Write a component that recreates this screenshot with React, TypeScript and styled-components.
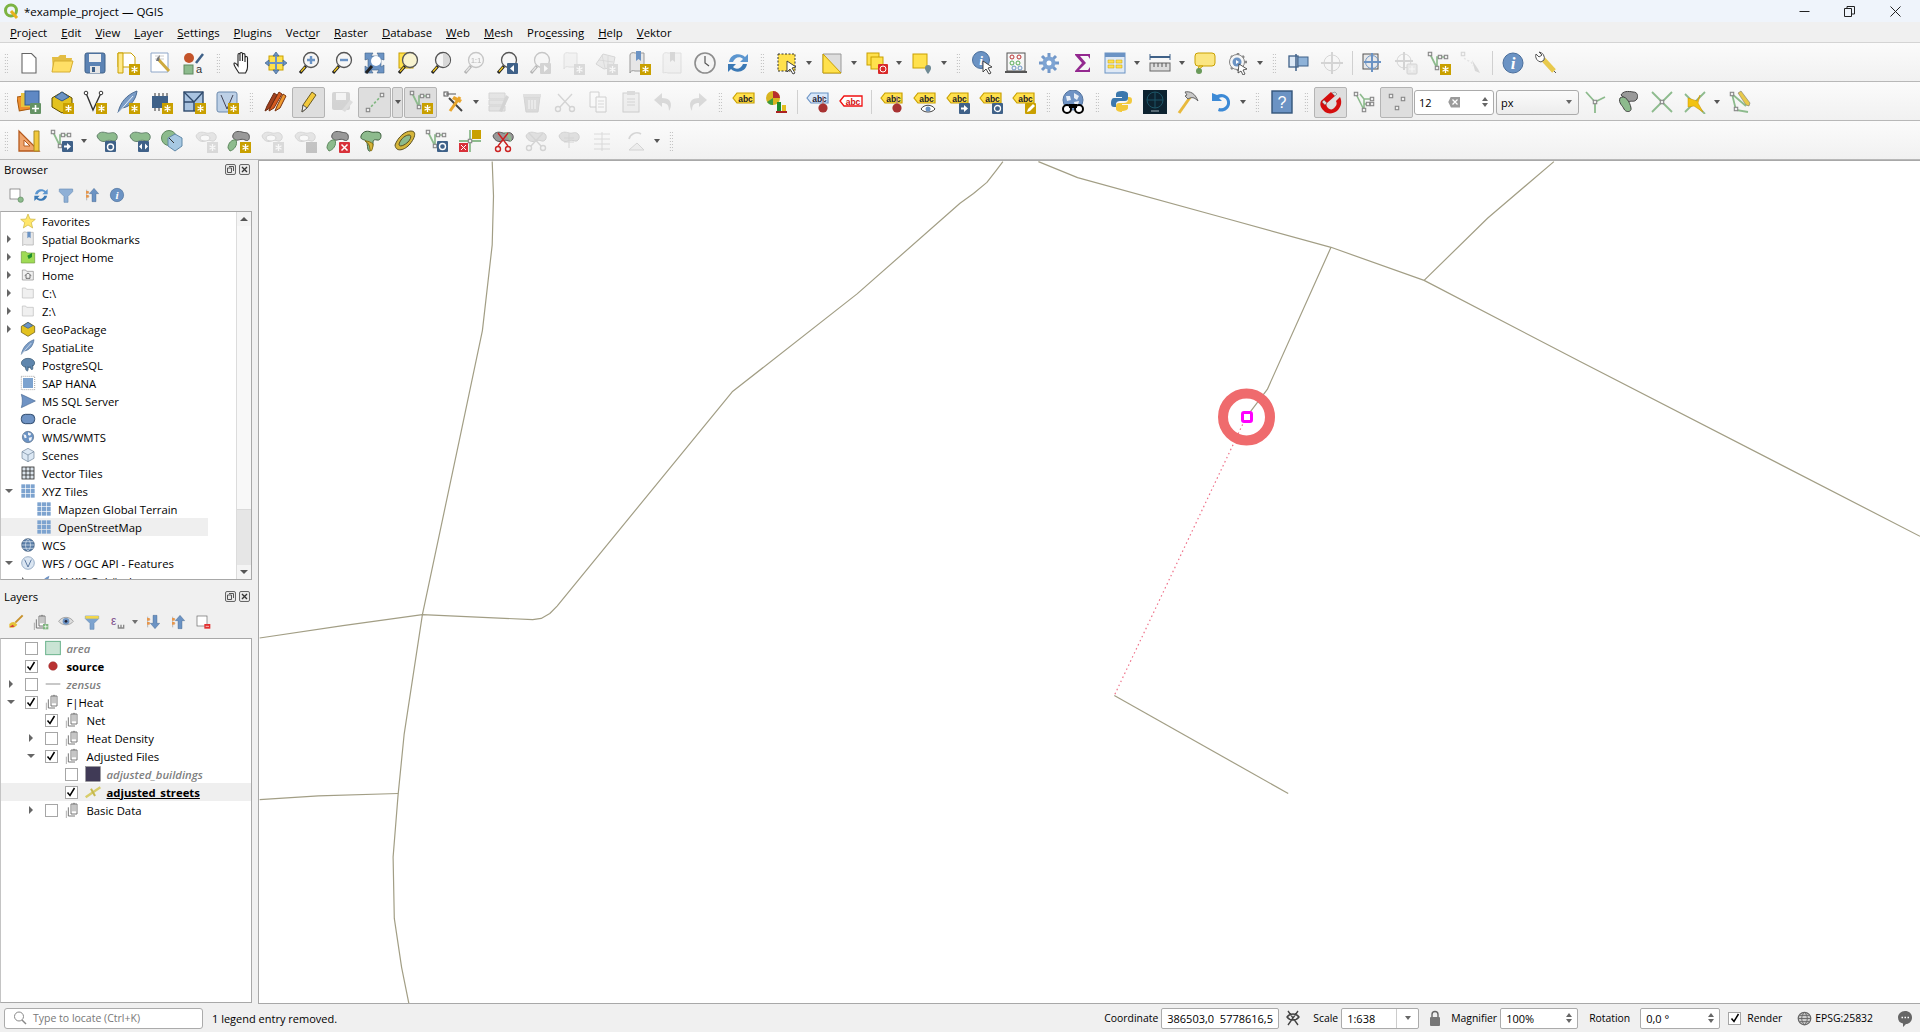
import React from "react";
import styled, { createGlobalStyle } from "styled-components";

const GlobalStyle = createGlobalStyle`
  html, body { margin: 0; padding: 0; height: 100%; overflow: hidden; }
  body { font-family: "Open Sans", "Liberation Sans", sans-serif; font-size: 11.3px; color: #000; background: #f0f0f0; }
`;

const Window = styled.div`
  width: 1920px;
  height: 1032px;
  display: flex;
  flex-direction: column;
  overflow: hidden;
`;

const TitleBar = styled.div`
  height: 22px;
  flex: none;
  background: #eff4fb;
  display: flex;
  align-items: center;
  padding-left: 3px;
  gap: 5px;
  font-size: 11.5px;
`;

const WinButtons = styled.div`
  margin-left: auto;
  display: flex;
  margin-right: 2px;
`;

const WinButton = styled.div`
  width: 45.5px;
  height: 22px;
  display: flex;
  align-items: center;
  justify-content: center;
`;

const MenuBar = styled.div`
  height: 20px;
  flex: none;
  background: #f0f0f0;
  border-bottom: 1px solid #d4d4d4;
  display: flex;
  align-items: center;
  gap: 14px;
  padding-left: 10px;
  font-size: 11.4px;
`;

const Toolbars = styled.div`
  display: flex;
  flex-direction: column;
  flex: none;
`;

const ToolRow = styled.div`
  height: 39px;
  box-sizing: border-box;
  padding-top: 2px;
  background: linear-gradient(#fbfbfb, #f1f1f1);
  border-bottom: 1px solid #b8b8b8;
  display: flex;
  align-items: center;
`;

const Grip = styled.div<{ $m?: number }>`
  width: 4px;
  height: 20px;
  margin: 0 ${({ $m }) => $m ?? 6}px;
  background-image: radial-gradient(#b0b0b0 0.7px, transparent 0.8px);
  background-size: 2.5px 3px;
  &:first-child {
    margin: 0 4px;
  }
`;

const Separator = styled.div`
  width: 1px;
  height: 24px;
  margin: 0 3.5px;
  background: #d0d0d0;
`;

const ToolButton = styled.div<{ $active?: boolean; $off?: boolean }>`
  width: 33px;
  height: 31px;
  flex: none;
  box-sizing: border-box;
  display: flex;
  align-items: center;
  justify-content: center;
  border-radius: 2px;
  border: 1px solid ${({ $active }) => ($active ? "#b4b4b4" : "transparent")};
  background: ${({ $active }) => ($active ? "#dedede" : "transparent")};
  svg {
    opacity: ${({ $off }) => ($off ? 0.3 : 1)};
    filter: ${({ $off }) => ($off ? "grayscale(1)" : "none")};
  }
`;

const Caret = styled.div`
  width: 12px;
  height: 31px;
  flex: none;
  display: flex;
  align-items: center;
  justify-content: center;
  &::after {
    content: "";
    border-left: 3.5px solid transparent;
    border-right: 3.5px solid transparent;
    border-top: 4px solid #555;
  }
`;

const CaretBox = styled(Caret)`
  box-sizing: border-box;
  border: 1px solid #b4b4b4;
  border-radius: 2px;
  background: #dedede;
  margin: 0 1px;
  width: 11px;
`;

const SpinField = styled.div<{ $w: number }>`
  width: ${({ $w }) => $w}px;
  height: 25px;
  flex: none;
  box-sizing: border-box;
  border: 1px solid #ababab;
  border-radius: 3px;
  background: #fff;
  display: flex;
  align-items: center;
  padding-left: 4px;
  font-size: 11px;
  margin-left: 1px;
`;

const ClearMark = styled.div`
  margin-left: auto;
  width: 12px;
  height: 11px;
  background: #9a9a9a;
  clip-path: polygon(22% 0, 100% 0, 100% 100%, 22% 100%, 0 50%);
  color: #fff;
  display: flex;
  align-items: center;
  justify-content: center;
  padding-left: 2px;
  box-sizing: border-box;
`;

const ComboField = styled(SpinField)`
  background: linear-gradient(#fbfbfb, #ececec);
  justify-content: space-between;
  padding-right: 6px;
  margin-left: 2px;
`;

const Main = styled.div`
  flex: 1;
  display: flex;
  min-height: 0;
`;

const Side = styled.div`
  width: 252px;
  flex: none;
  display: flex;
  flex-direction: column;
`;

const BrowserDock = styled.div`
  height: 420px;
  flex: none;
  display: flex;
  flex-direction: column;
`;

const LayersDock = styled.div`
  flex: 1;
  min-height: 0;
  display: flex;
  flex-direction: column;
  margin-top: 7px;
`;

const DockHead = styled.div`
  height: 19px;
  flex: none;
  display: flex;
  align-items: center;
  padding-left: 4px;
  font-size: 11.3px;
`;

const DockButtons = styled.div`
  margin-left: auto;
  display: flex;
  gap: 3px;
  margin-right: 2px;
`;

const DockButton = styled.div`
  width: 11px;
  height: 11px;
  box-sizing: border-box;
  border: 1px solid #666;
  border-radius: 2px;
  display: flex;
  align-items: center;
  justify-content: center;
  background: #e8e8e8;
`;

const DockTools = styled.div`
  height: 32px;
  flex: none;
  display: flex;
  align-items: center;
  padding-left: 3.5px;
`;

const SmallTool = styled.div`
  width: 25.2px;
  height: 24px;
  flex: none;
  display: flex;
  align-items: center;
  justify-content: center;
`;

const SmallCaret = styled(Caret)`
  width: 11px;
  height: 18px;
  &::after {
    border-top-color: #707070;
  }
`;

const TreeFrame = styled.div`
  flex: 1;
  min-height: 0;
  display: flex;
  background: #fff;
  border: 1px solid #a8a8a8;
  border-left-color: #c4c4c4;
  overflow: hidden;
`;

const LayerFrame = styled(TreeFrame)`
  margin-bottom: 1px;
`;

const TreeList = styled.div`
  flex: 1;
  overflow: hidden;
`;

const ScrollBar = styled.div`
  width: 14px;
  flex: none;
  display: flex;
  flex-direction: column;
  background: #e6e6e6;
  border-left: 1px solid #dcdcdc;
`;

const ScrollEnd = styled.div<{ $down?: boolean }>`
  height: 14px;
  background: #f4f4f4;
  display: flex;
  align-items: center;
  justify-content: center;
  &::after {
    content: "";
    border-left: 4px solid transparent;
    border-right: 4px solid transparent;
    ${({ $down }) => ($down ? "border-top: 4px solid #555;" : "border-bottom: 4px solid #555;")}
  }
`;

const ScrollThumb = styled.div`
  height: 283px;
  background: #f8f8f8;
  border-bottom: 1px solid #dadada;
`;

const ScrollRest = styled.div`
  flex: 1;
`;

const Row = styled.div<{ $selected?: number }>`
  height: 18px;
  display: flex;
  align-items: center;
  white-space: nowrap;
  background: ${({ $selected }) =>
    $selected ? `linear-gradient(90deg, #efefef ${$selected}px, transparent ${$selected}px)` : "transparent"};
`;

const RowIndent = styled.div<{ $w: number; $pad: number }>`
  width: ${({ $w }) => $w}px;
  padding-left: ${({ $pad }) => $pad}px;
  box-sizing: border-box;
  flex: none;
  display: flex;
  align-items: center;
`;

const RowIcon = styled.div`
  width: 18px;
  height: 18px;
  flex: none;
  display: flex;
  align-items: center;
  justify-content: center;
  margin-right: 5px;
`;

const ArrowBox = styled.div`
  width: 8px;
  display: flex;
  align-items: center;
  justify-content: center;
`;

const Arrow = styled.div<{ $open?: boolean }>`
  width: 0;
  height: 0;
  ${({ $open }) =>
    $open
      ? `border-left: 4px solid transparent; border-right: 4px solid transparent; border-top: 4px solid #666;`
      : `border-top: 4px solid transparent; border-bottom: 4px solid transparent; border-left: 4px solid #666;`}
`;

const Check = styled.div`
  width: 13px;
  height: 13px;
  flex: none;
  box-sizing: border-box;
  border: 1px solid #a6a6a6;
  background: #fff;
  margin-right: 6px;
  display: flex;
  align-items: center;
  justify-content: center;
`;

const RenderCheck = styled(Check)`
  margin-left: 8px;
`;

const LayerName = styled.span<{ $kind?: string }>`
  font-weight: ${({ $kind }) => ($kind === "bold" || $kind === "current" ? 700 : $kind === "off" ? 600 : 400)};
  font-style: ${({ $kind }) => ($kind === "off" ? "italic" : "normal")};
  color: ${({ $kind }) => ($kind === "off" ? "#808080" : "#000")};
  text-decoration: ${({ $kind }) => ($kind === "current" ? "underline" : "none")};
`;

const Splitter = styled.div`
  width: 6px;
  flex: none;
`;

const MapFrame = styled.div`
  flex: 1;
  background: #fff;
  border: 1px solid #a8a8a8;
  border-right: none;
  min-width: 0;
`;

const MapSvg = styled.svg`
  display: block;
  width: 100%;
  height: 100%;
`;

const StatusBar = styled.div`
  height: 28px;
  flex: none;
  display: flex;
  align-items: center;
  padding-left: 4px;
  font-size: 10.4px;
  background: #f0f0f0;
`;

const Locator = styled.div`
  width: 199px;
  height: 21px;
  box-sizing: border-box;
  border: 1px solid #ababab;
  border-radius: 3px;
  background: #fff;
  display: flex;
  align-items: center;
  padding-left: 8px;
  gap: 6px;
  color: #777;
  font-size: 10.5px;
`;

const Message = styled.div`
  margin-left: 9px;
  font-size: 11px;
`;

const StatusRight = styled.div`
  margin-left: auto;
  display: flex;
  align-items: center;
`;

const StatusLabel = styled.span<{ $l?: number }>`
  margin-left: ${({ $l }) => $l ?? 0}px;
  margin-right: 3px;
`;

const StatusField = styled.div<{ $w: number; $l?: number }>`
  width: ${({ $w }) => $w}px;
  margin-left: ${({ $l }) => $l ?? 0}px;
  height: 21px;
  box-sizing: border-box;
  border: 1px solid #ababab;
  border-radius: 2px;
  background: #fff;
  display: flex;
  align-items: center;
  padding-left: 5px;
  font-size: 11px;
  flex: none;
`;

const StatusIcon = styled.div<{ $w: number; $r?: number }>`
  width: ${({ $w }) => $w}px;
  height: 20px;
  flex: none;
  box-sizing: border-box;
  display: flex;
  align-items: center;
  justify-content: ${({ $r }) => ($r === undefined ? "center" : "flex-end")};
  padding-right: ${({ $r }) => $r ?? 0}px;
`;

const FieldEnd = styled.div`
  margin-left: auto;
  height: 100%;
  display: flex;
  flex-direction: column;
  align-items: center;
  justify-content: center;
  gap: 2px;
  width: 16px;
`;

const SpinUp = styled.i`
  border-left: 3.5px solid transparent;
  border-right: 3.5px solid transparent;
  border-bottom: 4px solid #666;
`;

const SpinDown = styled.i`
  border-left: 3.5px solid transparent;
  border-right: 3.5px solid transparent;
  border-top: 4px solid #666;
`;

const ComboEnd = styled.div`
  margin-left: auto;
  width: 21px;
  height: 100%;
  border-left: 1px solid #ccc;
  display: flex;
  align-items: center;
  justify-content: center;
`;

const Svg = ({ s = 24, children }: { s?: number; children: React.ReactNode }) => (
  <svg width={s} height={s} viewBox="0 0 24 24" fill="none">
    {children}
  </svg>
);

// shared bits of the QGIS icon theme
const GOLD = "#c9a000";
const YEL = "#ffe14d";
const GRN = "#8dbb8d";
const NAVY = "#3f6188";
const BLUE = "#6b93c4";

const Star = () => (
  <g>
    <rect x="13" y="13" width="11" height="11" fill={GOLD} />
    <path d="M18.5 15v7M15.5 16.7l6 3.6M21.5 16.7l-6 3.6" stroke="#fff" strokeWidth="1.3" />
  </g>
);
const Mag = ({ fill = "#f6f6f6" }: { fill?: string }) => (
  <g>
    <path d="M9 15l-6 7" stroke="#222" strokeWidth="3" />
    <path d="M8 16l-4 4.6" stroke="#f2c81e" strokeWidth="1.4" />
    <circle cx="14" cy="9" r="7.5" fill={fill} stroke="#555" strokeWidth="1.3" />
  </g>
);
const Node = ({ x, y, c = "#888" }: { x: number; y: number; c?: string }) => (
  <rect x={x - 1.7} y={y - 1.7} width="3.4" height="3.4" fill="#eee" stroke={c} strokeWidth="1.1" />
);
const VLine = () => (
  <g>
    <path d="M3 3l7 14V6h8" stroke={GRN} strokeWidth="1.7" />
    <Node x={3} y={3} />
    <Node x={10} y={17} />
    <Node x={13} y={6} />
    <Node x={19} y={6} />
  </g>
);
const Blob = ({ fill = GRN, stroke = "#62806a" }: { fill?: string; stroke?: string }) => (
  <path d="M2 7c2-5 7-4 10-3s6-2 9 1 0 8-3 7-5-1-7 0-7 1-9-5z" fill={fill} stroke={stroke} strokeWidth="1" />
);
const Sq = ({ x, y, c = NAVY, children }: { x: number; y: number; c?: string; children?: React.ReactNode }) => (
  <g transform={`translate(${x} ${y})`}>
    <rect width="11" height="11" rx="1" fill={c} />
    {children}
  </g>
);
const ArrowR = () => <path d="M2 4.5h3V2l4 3.5L5 9V6.5H2z" fill="#fff" />;
const LabelTag = ({ c = "#222", f = YEL, s = GOLD }: { c?: string; f?: string; s?: string }) => (
  <g>
    <path d="M1 8l4-5h17v10H5z" fill={f} stroke={s} strokeWidth="1.2" />
    <text x="13.5" y="11.5" fontSize="8.5" fontWeight="700" textAnchor="middle" fontFamily="Liberation Sans" fill={c}>
      abc
    </text>
  </g>
);
const Pin = () => (
  <g>
    <path d="M17 6v8" stroke="#b88" strokeWidth="1.3" />
    <circle cx="17" cy="18" r="4.6" fill="#a83232" />
  </g>
);
const Folder = ({ d = "#bbb" }: { d?: string }) => (
  <path d="M3.5 4.5h5l1.5 2h10v13h-16.500z" fill="#f0f0f0" stroke={d} strokeWidth="1" />
);
const Globe = ({ c = BLUE }: { c?: string }) => (
  <g>
    <circle cx="12" cy="12" r="8.500" fill={c} stroke="#5a6f88" />
    <path d="M5 8l4 1 1 4-3 1zM12 5l5 2-2 3-3-1zM13 13l5-1-1 5-3 1z" fill="#f0f3f8" />
  </g>
);
const Grid3 = ({ c = "#7da3cf" }: { c?: string }) => (
  <g fill={c}>
    {[2, 9, 16].map((y) =>
      [2, 9, 16].map((x) => <rect key={`${x}-${y}`} x={x} y={y} width="6" height="6" />)
    )}
  </g>
);
const Stack = () => (
  <g>
    <path d="M9 3h9v15H9z" fill="#fff" stroke="#6e6e6e" strokeWidth="1.400" />
    <path d="M5 8v13h10" stroke="#6e6e6e" strokeWidth="1.400" />
    <path d="M2 13v11" stroke="#9a9a9a" strokeWidth="1.200" />
    <path d="M12 14V4c0-3 3-3 3 0v10" stroke="#6e6e6e" strokeWidth="1.200" />
  </g>
);
const Scissors = () => (
  <g stroke="#888" strokeWidth="1.400">
    <path d="M5 4l12 13M19 4L7 17" />
    <circle cx="5" cy="19" r="2.500" />
    <circle cx="19" cy="19" r="2.500" />
  </g>
);

const icons: Record<string, React.ReactNode> = {
  newDoc: <path d="M5 2.500h9.500l4.500 4.500v15H5z" fill="#fff" stroke="#666" strokeWidth="1.100" />,
  folder: <g><path d="M2 6h6l2-2h6v3h6l-2 14H3z" fill="#e3bd43" /><path d="M4 10h19l-3 11H2z" fill="#ffdf66" stroke="#d6ae30" /></g>,
  save: <g><rect x="2" y="2" width="20" height="20" rx="2" fill="#5c83b4" stroke="#3f6188" /><rect x="6" y="3" width="12" height="8" fill="#f1f1f1" /><rect x="7" y="15" width="10" height="7" fill="#e6e6e6" /><rect x="9" y="16" width="3" height="5" fill="#3f6188" /></g>,
  layout: <g><path d="M2 2h13l4 4v10H2z" fill="#fff" stroke="#c9a000" /><path d="M2 2h5v20H2z" fill="#ffe98a" stroke={GOLD} /><Star /></g>,
  manager: <g><path d="M2 2h17v19H2z" fill="#fff" stroke="#8ea6c8" /><path d="M6 5h9M6 8h9" stroke="#ccc" /><path d="M9 8l11 12" stroke="#ceaa3e" strokeWidth="3" /><path d="M8 7l3-3-1 6-3 0z" fill="#777" /></g>,
  style: <g><circle cx="7" cy="7" r="5" fill="#c4542a" /><path d="M14 12L21 3" stroke={NAVY} strokeWidth="2.500" /><rect x="2" y="14" width="9" height="9" fill="#8dbb8d" stroke="#5f8a5f" /><text x="17" y="22" fontSize="11" fontFamily="Liberation Sans" fill="#333" textAnchor="middle">a</text></g>,
  hand: <path d="M8 22c-2-3-5-7-5-9s2-1 4 2V4c0-2 2-2 2 0v6V3c0-2 2.500-2 2.500 0v7-6c0-2 2.500-2 2.500 0v7-4c0-2 2.500-2 2.500 0v9c0 3-1 4-2 6z" fill="#fff" stroke="#222" strokeWidth="1.100" />,
  panSel: <g><rect x="5" y="5" width="14" height="14" fill={YEL} stroke={GOLD} /><path d="M12 1l3 4H9zM12 23l3-4H9zM1 12l4-3v6zM23 12l-4-3v6z" fill={BLUE} stroke={NAVY} strokeWidth=".7" /><path d="M12 5v14M5 12h14" stroke={BLUE} strokeWidth="2" /></g>,
  zoomIn: <g><Mag /><path d="M14 5v8M10 9h8" stroke={BLUE} strokeWidth="2.400" /></g>,
  zoomOut: <g><Mag /><path d="M10 9h8" stroke={BLUE} strokeWidth="2.400" /></g>,
  zoomFull: <g><path d="M2 2h8l-2 3 8 0-2-3h7v7l-3-1v8l3-2v8h-7l2-3H8l2 3H2v-7l3 2V8L2 9z" fill={BLUE} stroke={NAVY} strokeWidth=".6" /><path d="M9 15l-6 7" stroke="#222" strokeWidth="3" /><circle cx="13" cy="10" r="5" fill="#fff" /></g>,
  zoomLayer: <g><rect x="3" y="2" width="14" height="15" fill={YEL} stroke={GOLD} /><Mag fill="#f8f3d0" /></g>,
  zoomSel: <g><Mag /><path d="M14 2a7 7 0 010 14z" fill="#d8d8d8" /></g>,
  zoomOne: <g><Mag /><text x="14" y="12" fontSize="7" fontWeight="700" textAnchor="middle" fontFamily="Liberation Sans" fill="#555">1:1</text></g>,
  zoomLast: <g><Mag /><Sq x={12} y={12} c={NAVY}><path d="M7 2L3 5.500 7 9z" fill="#fff" /></Sq></g>,
  zoomNext: <g><Mag /><Sq x={12} y={12} c="#888"><path d="M4 2l4 3.500L4 9z" fill="#fff" /></Sq></g>,
  mapView: <g><path d="M3 4c0-2 3-3 5-2h8v14H8c-2-1-5 0-5 2z" fill="#e6e6e6" stroke="#aaa" /><Star /></g>,
  map3d: <g><path d="M2 13L9 3l12 3-2 10-9 2z" fill="#ccc" stroke="#888" /><path d="M5 9l14 2M8 4l3 13M14 5l0 12" stroke="#888" strokeWidth=".7" /><Star /></g>,
  bookNew: <g><path d="M3 4c0-2 3-3 5-2h9v18H8c-2-1-5 0-5 2z" fill="#e6e6e6" stroke="#999" /><path d="M9 0h5v10l-2.500-2L9 10z" fill={BLUE} /><Star /></g>,
  book: <g><path d="M3 4c0-2 3-3 5-2h13v20H8c-2-1-5 0-5 0z" fill="#e6e6e6" stroke="#aaa" /><path d="M10 1h5v10l-2.500-2-2.500 2z" fill={BLUE} /></g>,
  clock: <g><circle cx="12" cy="12" r="10" fill="#f4f4f4" stroke="#8d8d8d" strokeWidth="1.600" /><path d="M12 5v7l4 3" stroke="#555" strokeWidth="1.200" /></g>,
  refresh: <g><path d="M3 11C4 3 14 1 19 6l3-3v8h-8l3-3c-3-3-8-2-10 3z" fill="#5c96cf" /><path d="M21 13c-1 8-11 10-16 5l-3 3v-8h8l-3 3c3 3 8 2 10-3z" fill="#3b79b5" /></g>,
  select: <g><rect x="3" y="3" width="17" height="17" fill={YEL} stroke="#333" strokeDasharray="2 1.500" /><path d="M12 10l9 6-4 1 3 5-2 1-3-5-3 3z" fill="#fff" stroke="#333" strokeWidth=".9" /></g>,
  selectPoly: <g><path d="M3 3h18v19H3z" fill="#ddd" stroke="#999" /><path d="M3 3l18 19H3z" fill={YEL} stroke={GOLD} /></g>,
  deselect: <g><rect x="2" y="2" width="12" height="12" fill={YEL} stroke={GOLD} /><rect x="6" y="6" width="12" height="12" fill={YEL} stroke={GOLD} /><rect x="13" y="13" width="10" height="10" rx="1" fill="#d92a2a" /><circle cx="18" cy="18" r="3" stroke="#fff" /></g>,
  selectLoc: <g><rect x="3" y="3" width="14" height="14" fill={YEL} stroke={GOLD} /><path d="M18 23c-3-4-3-5-3-6a3 3 0 016 0c0 1 0 2-3 6z" fill="#6f8a94" /></g>,
  identify: <g><circle cx="10" cy="9" r="8.500" fill={BLUE} stroke="#4b6f9c" /><text x="10" y="14" fontSize="13" fontStyle="italic" fontWeight="700" textAnchor="middle" fontFamily="Liberation Serif" fill="#fff">i</text><path d="M12 10l9 6-4 1 3 5-2 1-3-5-3 3z" fill="#fff" stroke="#333" strokeWidth=".9" /></g>,
  abacus: <g stroke="#555" fill="none"><rect x="3" y="2" width="18" height="18" /><path d="M1 21h22" strokeWidth="2" /><circle cx="8" cy="6" r="2" stroke="#b33" /><circle cx="15" cy="6" r="2" stroke="#b33" /><circle cx="8" cy="12" r="2" stroke="#5a5" /><circle cx="14" cy="12" r="2" stroke="#5a5" /><circle cx="10" cy="17" r="2" stroke={BLUE} /><circle cx="16" cy="17" r="2" stroke={BLUE} /></g>,
  gear: <g><path d="M12 2v20M2 12h20M5 5l14 14M19 5L5 19" stroke="#7298c9" strokeWidth="3" /><circle cx="12" cy="12" r="6.500" fill="#7ea4d3" /><circle cx="12" cy="12" r="2.500" fill="#fff" /></g>,
  sigma: <path d="M5 3h15v5l-2-3H10l6 7-7 7h9l2-3v5H5v-1l7-8-7-8z" fill="#93288f" />,
  table: <g><rect x="2" y="2" width="20" height="20" fill="#dfe9f5" stroke={BLUE} /><rect x="2" y="2" width="20" height="4" fill={BLUE} /><path d="M5 9h6v3H5zM13 9h6v3h-6zM5 14h6v3H5zM13 14h6v3h-6z" fill={YEL} stroke={GOLD} strokeWidth=".5" /></g>,
  ruler: <g><path d="M2 6h20" stroke={NAVY} strokeWidth="2" /><path d="M2 3v6M22 3v6" stroke={NAVY} /><rect x="2" y="12" width="20" height="8" fill="#ddd" stroke="#666" /><path d="M6 12v4M10 12v4M14 12v4M18 12v4" stroke="#555" /></g>,
  tip: <g><rect x="2" y="2" width="20" height="13" rx="3" fill="#fbe682" stroke={GOLD} /><path d="M6 15l-1 4 5-4z" fill="#fbe682" stroke={GOLD} /><circle cx="6" cy="20" r="3" fill="#6a9a5a" /></g>,
  mapTips: <g><path d="M12 2v18M3 11h18M5 5l13 13M18 5L5 18" stroke="#888" strokeWidth="2.500" /><circle cx="11" cy="11" r="7.500" fill="#f6f6f6" stroke="#888" /><circle cx="11" cy="11" r="4.500" fill={BLUE} /><path d="M10 9l3 2-3 2z" fill="#fff" /><path d="M13 13l8 5-4 1 2 4-2 1-2-4-3 2z" fill="#fff" stroke="#333" strokeWidth=".8" /></g>,
  pinBox: <g><rect x="2" y="5" width="9" height="11" fill="#dce8f5" stroke={NAVY} strokeWidth="1.300" /><rect x="11" y="6" width="10" height="9" fill="#8eb2d8" stroke={NAVY} /><path d="M9 3v17" stroke={NAVY} strokeWidth="1.500" /></g>,
  cross: <g stroke="#888"><circle cx="12" cy="12" r="8" /><path d="M12 1v22M1 12h22" strokeWidth="2" /></g>,
  crossSel: <g><rect x="2" y="3" width="15" height="15" fill="#e8e8e8" stroke="#555" /><circle cx="11" cy="11" r="6.500" stroke={BLUE} /><path d="M11 2v19M3 11h17" stroke={BLUE} strokeWidth="2" /></g>,
  crossAdd: <g stroke="#888"><circle cx="10" cy="10" r="7" /><path d="M10 1v18M1 10h18" strokeWidth="2" /><rect x="13" y="13" width="10" height="10" rx="1" fill="#ccc" /><path d="M18 15v6M15 18h6" stroke="#fff" /></g>,
  vstar: <g><VLine /><Star /></g>,
  trace: <g><path d="M3 3c1 5 3 6 6 7s3 3 4 5" stroke="#bbb" strokeDasharray="2 2" strokeWidth="1.500" /><Node x={3} y={3} /><path d="M12 9l6 9 2 4-5-2z" fill="#999" /></g>,
  info: <g><circle cx="12" cy="12" r="10" fill={BLUE} stroke="#4b6f9c" /><text x="12" y="18" fontSize="17" fontStyle="italic" fontWeight="700" textAnchor="middle" fontFamily="Liberation Serif" fill="#fff">i</text></g>,
  wrench: <g><path d="M3 5a5 5 0 007 5l12 12" stroke="#555" strokeWidth="1" /><path d="M9 8l11 12" stroke="#e8c94c" strokeWidth="5" /><path d="M2 3l3 3 3-2-3-3a6 6 0 015 8l-3 2a6 6 0 01-5-8z" fill="#fff" stroke="#555" /></g>,

  addLayers: <g><rect x="1" y="6" width="13" height="14" transform="rotate(-10 7 13)" fill="#ef8f2f" stroke="#a85a10" /><rect x="4" y="3" width="13" height="14" fill="#e8c33e" /><rect x="8" y="1" width="14" height="14" fill="#5f88c4" stroke="#345a8c" /><rect x="13" y="13" width="11" height="11" rx="1" fill="#649264" /><path d="M18.500 15v7M15 18.500h7" stroke="#fff" strokeWidth="1.600" /></g>,
  gpkg: <g><path d="M2 8l10-6 10 6v9l-10 6-10-6z" fill="#e3c21f" stroke="#5b4a00" /><path d="M5 7l7-5 7 5-7 4z" fill={BLUE} stroke="#345a8c" /><Star /></g>,
  vnew: <g><path d="M3 3l7 17L18 3" stroke="#333" strokeWidth="1.400" /><circle cx="3" cy="3" r="1.800" stroke="#333" fill="#fff" /><circle cx="18" cy="3" r="1.800" stroke="#333" fill="#fff" /><Star /></g>,
  feather: <g><path d="M2 23c2-10 8-18 19-22-1 8-6 16-15 17z" fill="#7a9cc6" stroke="#4c6c94" /><path d="M2 23L17 6" stroke="#e6eef8" /></g>,
  featherStar: <g><path d="M2 23c2-10 8-18 19-22-1 8-6 16-15 17z" fill="#7a9cc6" stroke="#4c6c94" /><path d="M2 23L17 6" stroke="#e6eef8" /><Star /></g>,
  chip: <g><rect x="3" y="6" width="16" height="12" fill={NAVY} /><path d="M6 3v3M10 3v3M14 3v3M18 3v3M6 18v3M10 18v3" stroke="#333" /><Star /></g>,
  mesh: <g><rect x="2" y="2" width="19" height="19" fill="#a9c3e0" stroke="#2f4a6c" strokeWidth="1.400" /><path d="M2 2l10 10L21 2M12 12H2M12 12v9" stroke="#2f4a6c" strokeWidth="1.400" /><Star /></g>,
  virtual: <g><rect x="2" y="2" width="20" height="20" rx="2" fill="#bdd0e6" stroke="#6b89ad" /><path d="M6 5l6 14 6-14" stroke="#445" /><Star /></g>,
  pencils: <g><path d="M5 21l2-5L15 2l3 2-8 14z" fill="#d65a20" stroke="#7a3210" /><path d="M11 21l2-5 6-12 3 2-6 12z" fill="#ef9a30" stroke="#7a3210" /><path d="M1 21l2-5 7-13 3 2-7 13z" fill="#a0401f" stroke="#6a2a10" /></g>,
  pencil: <g><path d="M5 22l1-7L15 2l4 3-9 13z" fill="#f2c93c" stroke="#6b5a20" /><path d="M5 22l1-7 4 3z" fill="#eee" stroke="#555" /></g>,
  saveEdit: <g><rect x="2" y="2" width="18" height="18" rx="2" fill="#888" /><rect x="6" y="3" width="10" height="7" fill="#eee" /><path d="M12 20l8-10 3 2-8 10z" fill="#aaa" /></g>,
  addLine: <g><path d="M5 20L19 5" stroke="#80b780" strokeWidth="1.600" strokeDasharray="2.500 2" /><Node x={5} y={20} /><Node x={19} y={5} /></g>,
  digitize: <g><path d="M4 4h10" stroke="#555" /><rect x="2" y="2" width="4" height="4" stroke="#555" /><path d="M7 8l13 13" stroke="#444" strokeWidth="2" /><path d="M18 7L8 21" stroke="#e8a52c" strokeWidth="3" /><path d="M12 6l8 4-2 3-8-4z" fill="#e8a52c" /></g>,
  editAttr: <g><path d="M2 3h16v6H2zM2 10h16v5H2zM2 16h16v5H2z" fill="#bbb" stroke="#888" /><path d="M12 21l7-16 3 2-7 15z" fill="#888" /></g>,
  trash: <g><path d="M4 7h16l-2 15H6z" fill="#b89a9a" stroke="#887" /><path d="M3 4h18v3H3z" fill="#baa" /><path d="M9 10v9M12 10v9M15 10v9" stroke="#fff" /></g>,
  cut: <Scissors />,
  copy: <g><path d="M4 2h9v15H4z" fill="#fff" stroke="#777" /><path d="M10 7h10v15H10z" fill="#fff" stroke="#777" /><path d="M12 11h6M12 14h6M12 17h6" stroke="#999" /></g>,
  paste: <g><rect x="4" y="3" width="16" height="19" fill="#ddd" stroke="#777" /><rect x="8" y="1" width="8" height="4" fill="#999" /><path d="M8 9h8M8 12h8M8 15h8" stroke="#888" /></g>,
  undo: <path d="M10 3L2 10l8 7v-4c5 0 7 2 7 8 4-7 2-13-7-13z" fill="#999" />,
  redo: <path d="M14 3l8 7-8 7v-4c-5 0-7 2-7 8-4-7-2-13 7-13z" fill="#999" />,
  labelTool: <LabelTag />,
  diagram: <g><circle cx="8" cy="8" r="7" fill="#d9b520" /><path d="M8 8V1a7 7 0 017 7z" fill="#b72d2d" /><path d="M8 8l-6 4a7 7 0 006 3z" fill="#3d9b3d" /><rect x="12" y="12" width="4" height="10" fill="#1c8c2c" /><rect x="17" y="15" width="4" height="7" fill="#e3bd1e" /><path d="M11 22h11" stroke="#a22" strokeWidth="2" /></g>,
  labelPin: <g><LabelTag c="#223" f="#d8e8fb" s={BLUE} /><Pin /></g>,
  labelRed: <g><path d="M1 11l4-5h18v10H5z" fill="#fff" stroke="#f01010" strokeWidth="1.300" /><text x="14" y="14.500" fontSize="8.500" fontWeight="700" textAnchor="middle" fontFamily="Liberation Sans" fill="#d01010">abc</text></g>,
  labelYPin: <g><LabelTag /><Pin /></g>,
  labelEye: <g><LabelTag /><path d="M8 19c3-5 11-5 14 0-3 4-11 4-14 0z" fill="#fff" stroke="#444" /><circle cx="15" cy="19" r="2.500" fill={BLUE} /></g>,
  labelMove: <g><LabelTag /><Sq x={13} y={13}><ArrowR /></Sq></g>,
  labelRot: <g><LabelTag /><Sq x={13} y={13}><circle cx="5.500" cy="5.500" r="3" stroke="#fff" strokeWidth="1.300" /></Sq></g>,
  labelEdit: <g><LabelTag /><Sq x={13} y={13} c={GOLD}><path d="M2 9l1-3 5-5 2 2-5 5z" fill="#fff" /></Sq></g>,
  globeBino: <g><circle cx="12" cy="10" r="10" fill="#6f93c4" stroke="#54749e" /><path d="M5 6l4 0 1 4-4 1zM13 3l5 3-2 4-3-2zM13 12l5-1-1 4-3 1z" fill="#e8eef6" /><circle cx="6" cy="19" r="4" fill="#fff" stroke="#000" strokeWidth="2" /><circle cx="18" cy="19" r="4" fill="#fff" stroke="#000" strokeWidth="2" /><path d="M8 14h8v4H8z" fill="#000" /></g>,
  python: <g><path d="M12 1c-4 0-6 1-6 3v3h6v1H4c-2 0-3 2-3 5s1 4 3 4h2v-3c0-2 2-3 4-3h5c2 0 3-1 3-3V4c0-2-3-3-6-3z" fill="#3c78ad" /><path d="M12 21c3 0 6-1 6-3v-3h-6v-1h7c2 0 3-1 3-4 0-2-1-3-3-3h-1v3c0 2-2 3-4 3H9c-2 0-3 1-3 3v3c0 2 3 3 6 3z" fill="#f2c93c" /></g>,
  dark: <g><rect x="0" y="0" width="24" height="24" fill="#0d2330" /><circle cx="12" cy="10" r="8" stroke="#1d5566" /><path d="M12 2v16M4 10h16" stroke="#1d5566" /><path d="M8 21h8" stroke="#a0b0b8" /></g>,
  hammer: <g><path d="M3 23L15 6" stroke="#e8b93c" strokeWidth="3" /><path d="M9 2c5-1 10 1 13 9-3-3-5-4-8-3l-2 1-3-3 2-1z" fill="#c8c8c8" stroke="#666" /></g>,
  undoBlue: <g><path d="M8 5c7-3 14 2 13 9-1 6-7 9-12 7l1-3c4 1 7-1 8-4 1-5-4-8-8-6l3 3H3V3z" fill="#3d8ad6" /></g>,
  help: <g><rect x="2" y="1" width="20" height="22" fill={BLUE} stroke="#33547a" strokeWidth="1.400" /><text x="12" y="18" fontSize="16" fontWeight="400" textAnchor="middle" fontFamily="Liberation Sans" fill="#fff">?</text></g>,
  magnet: <g><path d="M12 2L2 11c-2 5 1 8 4 11 3 2 8 2 12-1 5-5 5-10 3-14l-4 4c1 2 1 4-1 6-2 3-5 3-7 1-2-2-2-4-1-5l8-7z" fill="#d40e0e" /><path d="M3 12l3 3 2-2-3-3zM13 3l3 3 2-2-2-2z" fill="#ddd" stroke="#666" strokeWidth=".5" /></g>,
  snapV: <g><path d="M4 4l8 16V9h8M12 9l-4-5" stroke={GRN} strokeWidth="1.600" /><path d="M12 14h8" stroke={GRN} strokeWidth="1.600" /><Node x={4} y={4} /><Node x={12} y={20} /><Node x={20} y={9} /><Node x={16} y={14} /><Node x={20} y={14} /></g>,
  snapDots: <g><Node x={6} y={6} /><Node x={18} y={9} /><Node x={12} y={18} /></g>,
  topoY: <g><path d="M11 12v11M11 12L2 2M11 12l10-5" stroke={GRN} strokeWidth="1.800" /><Node x={11} y={12} /></g>,
  topoPoly: <g><path d="M4 5c2-4 7-4 12-3 5 0 5 4 4 7-3 4-6 1-8 3z" fill="#999" stroke="#444" /><path d="M3 8c-2 5 3 8 4 11 2 4 8 3 7-1-1-6-6-14-11-10z" fill={GRN} stroke="#444" /></g>,
  topoX: <g><path d="M2 2l20 20M22 2L2 22" stroke={GRN} strokeWidth="1.800" /><Node x={12} y={12} /></g>,
  topoBolt: <g><path d="M2 22L22 2M2 4l20 20" stroke={GRN} strokeWidth="1.800" /><path d="M5 8l9 3 3-6-2 8 5 9-9-6-6 1z" fill="#f2c311" stroke="#c88c00" strokeWidth=".5" /></g>,
  topoPen: <g><path d="M4 4l4 16 12 2M4 4l14 12" stroke={GRN} strokeWidth="1.800" /><Node x={4} y={4} /><Node x={8} y={19} /><path d="M10 3l3-2 9 12-1 3-3-1z" fill="#e8c94c" stroke="#666" strokeWidth=".5" /></g>,

  triangle: <g><path d="M2 22V2l20 20z" fill="#f0a66e" stroke="#b55a1e" strokeWidth="1.300" /><path d="M7 17v-6l6 6z" fill="#fff" stroke="#b55a1e" /><path d="M17 2h5v20h-5z" fill="#f2c93c" stroke="#a88a20" /></g>,
  vMove: <g><VLine /><Sq x={12} y={12}><ArrowR /></Sq></g>,
  blobRot: <g><Blob /><Sq x={10} y={12}><circle cx="5.500" cy="6" r="3" stroke="#fff" strokeWidth="1.400" /></Sq></g>,
  blobMove: <g><Blob /><Sq x={10} y={12}><path d="M1 5.500l3-3v6zM10 5.500l-3-3v6z" fill="#fff" /></Sq></g>,
  hex: <g><circle cx="8" cy="9" r="7.500" fill={GRN} stroke="#5f8a5f" /><path d="M14 5l7 4v8l-7 5-7-5V9z" fill="#a6c8e2" stroke="#6189a8" /><path d="M8 9l5 5" stroke="#333" /></g>,
  ringAdd: <g><Blob fill="#bbb" stroke="#888" /><ellipse cx="11" cy="9" rx="5" ry="3" fill="#fff" stroke="#888" /><Star /></g>,
  partAdd: <g><path d="M6 6c1-4 6-4 9-3s6 0 7 3 0 7-4 5-7 1-9 0-4-2-3-5z" fill="#999" stroke="#555" /><path d="M1 19c0-5 4-9 8-8 2 5-2 10-6 11z" fill={GRN} stroke="#5f8a5f" /><Star /></g>,
  ringAddOff: <g><Blob fill="#bbb" stroke="#888" /><ellipse cx="11" cy="9" rx="5" ry="3" fill="#fff" stroke="#888" /><Star /></g>,
  ringDel: <g><Blob fill="#bbb" stroke="#888" /><ellipse cx="11" cy="9" rx="5" ry="3" fill="#fff" stroke="#888" /><rect x="13" y="13" width="11" height="11" fill="#e28" /></g>,
  partDel: <g><path d="M6 6c1-4 6-4 9-3s6 0 7 3 0 7-4 5-7 1-9 0-4-2-3-5z" fill="#999" stroke="#555" /><path d="M1 19c0-5 4-9 8-8 2 5-2 10-6 11z" fill={GRN} stroke="#5f8a5f" /><rect x="13" y="13" width="11" height="11" rx="1" fill="#d8313a" /><path d="M15.500 15.500l6 6M21.500 15.500l-6 6" stroke="#fff" strokeWidth="1.500" /></g>,
  reshape: <g><path d="M2 7c2-6 8-5 10-4s7-1 9 1 1 8-3 7-4 1-4 4-2 8-4 7-1-8-3-10-6-1-5-5z" fill={GRN} stroke="#3e5f3e" /><path d="M6 12c2 1 3 2 4 4 1 3 1 6 2 6s2-4 2-7c-2-2-5-3-8-3z" fill="#d5b53a" stroke="#8a6f10" /></g>,
  offset: <g><path d="M3 16C6 8 13 2 19 2s4 7-1 13-14 9-15 1z" fill="#d5b53a" stroke="#5a5020" /><path d="M7 15C9 9 14 6 17 6s2 4-1 7-9 6-9 2z" fill={GRN} stroke="#5a5020" /></g>,
  vRot: <g><VLine /><Sq x={12} y={12}><circle cx="5.500" cy="5.500" r="3" stroke="#fff" strokeWidth="1.400" /></Sq></g>,
  split: <g><path d="M12 1v22M1 12h22" stroke={GRN} strokeWidth="1.800" /><Node x={12} y={12} /><rect x="14" y="1" width="9" height="9" fill={GOLD} /><rect x="1" y="14" width="9" height="9" fill="#d8313a" /><path d="M3 16l5 5M8 16l-5 5" stroke="#fff" /></g>,
  splitCut: <g><Blob fill="#999" stroke="#555" /><path d="M13 3c5 0 8 4 7 10z" fill={GRN} /><path d="M7 4l10 13M17 4L7 17" stroke="#c22" strokeWidth="1.400" /><circle cx="7" cy="20" r="2.500" stroke="#c22" strokeWidth="1.400" /><circle cx="17" cy="20" r="2.500" stroke="#c22" strokeWidth="1.400" /></g>,
  splitOff: <g><Blob fill="#aaa" stroke="#777" /><Scissors /></g>,
  merge: <g><Blob fill="#aaa" stroke="#777" /><path d="M12 5v14M7 9h10M7 13h10" stroke="#888" /></g>,
  align: <g stroke="#999"><path d="M4 5h16M4 10h16M4 15h16M4 20h16M12 3v19" /></g>,
  rotateOff: <g><path d="M6 10a8 8 0 0112-5" stroke="#888" strokeWidth="1.600" /><path d="M14 14l7 7H6z" fill="#ddd" stroke="#888" /></g>,

  starTree: <path d="M12 1.500l3 7.500 8 .5-6 5 2 8-7-4.500-7 4.500 2-8-6-5 8-.5z" fill="#ffe66b" stroke="#c8b23c" />,
  bookTree: <g><path d="M4 3c1-2 4-2 5-1h11v19H9c-1-1-4-1-5 1z" fill="#e8e8e8" stroke="#aaa" /><path d="M11 1h5v10l-2.500-2-2.500 2z" fill={BLUE} /></g>,
  homeProject: <g><path d="M2 4h7l2 2h11v15H2z" fill="#9fdb55" stroke="#6f9a3c" /><path d="M11 10l7-4v6l-5 3z" fill="#1f8e2e" /></g>,
  homeTree: <g><Folder d="#888" /><path d="M7 13l5-4 5 4M9 12v5h6v-5" stroke="#333" /></g>,
  folderTree: <Folder />,
  gpkgTree: <g><path d="M2 8l10-6 10 6v9l-10 6-10-6z" fill="#e3c21f" stroke="#5b4a00" /><path d="M5 7l7-5 7 5-7 4z" fill={BLUE} stroke="#345a8c" /></g>,
  pg: <g><ellipse cx="12" cy="9" rx="10" ry="7" fill="#5f86ad" stroke="#36566f" /><path d="M8 14c0 4 1 7 3 7s1-5 1-7M15 14c1 3 1 5 3 5s1-4 1-7" fill="#5f86ad" stroke="#36566f" /></g>,
  hana: <g><rect x="2" y="2" width="20" height="20" stroke="#777" strokeDasharray="1.500 1.500" /><rect x="4.500" y="4.500" width="15" height="15" fill="#7da3cf" /></g>,
  mssql: <path d="M2 2c7 3 14 7 21 10-7 3-14 7-21 10 2-7 2-13 0-20z" fill="#6f93c4" stroke="#4a6a94" />,
  oracle: <rect x="2" y="5" width="20" height="14" rx="6" fill="#6f93c4" stroke="#2f4a6c" strokeWidth="1.500" />,
  globe: <Globe />,
  scenes: <g><path d="M12 2l9 5v10l-9 5-9-5V7z" fill="#dce8f4" stroke="#6a7f96" /><path d="M3 7l9 5 9-5M12 12v10" stroke="#6a7f96" /></g>,
  vtiles: <g><rect x="3" y="3" width="18" height="18" fill="#dce4ec" stroke="#333" strokeWidth="1.300" /><path d="M9 3v18M15 3v18M3 9h18M3 15h18" stroke="#333" strokeWidth="1.300" /></g>,
  xyz: <Grid3 />,
  wcs: <g><circle cx="12" cy="12" r="9.500" fill="#5a7ea8" stroke="#35506f" /><path d="M2 12h20M12 3c-5 5-5 13 0 18M12 3c5 5 5 13 0 18M4 7h16M4 17h16" stroke="#e0e8f2" /></g>,
  wfs: <g><circle cx="12" cy="12" r="9.500" fill="#dbe6f2" stroke="#6f8dae" /><path d="M7 7l5 11 5-11" stroke="#4a6a94" strokeWidth="1.300" /></g>,
  alkis: <path d="M6 22c1-8 5-14 14-18-1 7-5 12-11 13z" fill="#6f93c4" />,
  stack: <Stack />,
  area: <rect x="1" y="2" width="22" height="20" fill="#c9e4d4" stroke="#62ae86" strokeWidth="1.400" />,
  dot: <circle cx="12" cy="12" r="6.500" fill="#b93232" stroke="#8f2525" strokeWidth=".6" />,
  dash: <rect x="1" y="10.500" width="22" height="3" fill="#c8c8c8" />,
  dark2: <rect x="1" y="1" width="22" height="22" fill="#403a56" stroke="#6a6a6a" strokeWidth=".6" />,
  lineStyle: <g><path d="M1 20L23 5" stroke="#d8cd6a" strokeWidth="3.500" /><path d="M9 7l6 11" stroke="#c5b84e" strokeWidth="3" /></g>,
};

// small panel toolbar icons
const miniIcons: Record<string, React.ReactNode> = {
  addGroup: <g><rect x="3" y="3" width="15" height="15" fill="#fff" stroke="#666" /><circle cx="19" cy="19" r="4" fill="#8dbb8d" stroke="#5f8a5f" /></g>,
  filter: <path d="M2 3h20v4l-7 7v9h-6v-9L2 7z" fill="#8fb0d6" stroke="#6b8fb8" />,
  expand: <g><path d="M4 4v16M4 8h4M4 14h4" stroke="#999" /><rect x="3" y="6" width="4" height="4" fill="#e8964a" /><rect x="3" y="12" width="4" height="4" fill="#e8964a" /><path d="M15 2l7 8h-4v12h-6V10H8z" fill={BLUE} stroke={NAVY} strokeWidth=".6" /></g>,
  collapse: <g><path d="M4 4v16M4 8h4M4 14h4" stroke="#999" /><rect x="3" y="6" width="4" height="4" fill="#e8964a" /><rect x="3" y="12" width="4" height="4" fill="#e8964a" /><path d="M15 22l7-8h-4V2h-6v12H8z" fill={BLUE} stroke={NAVY} strokeWidth=".6" /></g>,
  brush: <g><path d="M11 13l11-11" stroke="#c8922c" strokeWidth="3" /><path d="M2 15c3-3 6-4 9-2l3 3c-3 4-8 6-12 4z" fill="#e5c23a" /><path d="M2 20l5-4 3 3z" fill="#d63a3a" /></g>,
  addStack: <g><Stack /><rect x="15" y="15" width="8" height="8" fill="#7fb57f" /><path d="M19 16v6M16 19h6" stroke="#fff" /></g>,
  eye: <g><path d="M1 11c5-8 17-8 22 0-5 7-17 7-22 0z" fill="#ddd" stroke="#888" /><circle cx="12" cy="11" r="5" fill={BLUE} /><circle cx="12" cy="11" r="2" fill="#223" /></g>,
  filterY: <g><path d="M2 3h20v4l-7 7v9h-6v-9L2 7z" fill="#7da3cf" stroke="#6b8fb8" /><path d="M2 3h20v4H2z" fill="#f2d64c" /></g>,
  epsilon: <g><text x="7" y="16" fontSize="18" textAnchor="middle" fontFamily="Liberation Sans" fill="#7b4c8a">ε</text><path d="M13 22v-6h2v4h2v-4h2v4h2v-4h2v6z" fill="#888" /></g>,
  remove: <g><rect x="3" y="3" width="15" height="15" fill="#fff" stroke="#666" /><rect x="14" y="15" width="9" height="7" fill="#e23030" /><path d="M16 18.500h5" stroke="#fff" /></g>,
};

const rows: string[][] = [
  ["|", "newDoc", "folder", "save", "layout", "manager", "style", "|", "hand", "panSel", "zoomIn", "zoomOut", "zoomFull", "zoomLayer", "zoomSel", "!zoomOne", "zoomLast", "!zoomNext", "!mapView", "!map3d", "bookNew", "!book", "clock", "refresh", "|", "select", ">", "selectPoly", ">", "deselect", ">", "selectLoc", ">", "|", "identify", "abacus", "gear", "sigma", "table", ">", "ruler", ">", "tip", "mapTips", ">", "|", "pinBox", "!cross", "/", "crossSel", "!crossAdd", "vstar", "!trace", "/", "info", "wrench"],
  ["|", "addLayers", "gpkg", "vnew", "featherStar", "chip", "mesh", "virtual", "|", "pencils", "*pencil", "!saveEdit", "*addLine", "#", "*vstar", "digitize", ">", "!editAttr", "!trash", "!cut", "!copy", "!paste", "!undo", "!redo", "¦", "labelTool", "diagram", "/", "labelPin", "labelRed", "/", "labelYPin", "labelEye", "labelMove", "labelRot", "labelEdit", "|", "globeBino", "|", "python", "dark", "hammer", "undoBlue", ">", "|", "help", "|", "*magnet", "snapV", "*snapDots", "@spin", "@combo", "topoY", "topoPoly", "topoX", "topoBolt", ">", "topoPen"],
  ["|", "triangle", "vMove", ">", "blobRot", "blobMove", "hex", "!ringAdd", "partAdd", "!ringAddOff", "!ringDel", "partDel", "reshape", "offset", "vRot", "split", "splitCut", "!splitOff", "!merge", "!align", "!rotateOff", ">", "|"],
];

const Tool = ({ item }: { item: string }) => {
  if (item === "|") return <Grip />;
  if (item === "¦") return <Grip $m={5} />;
  if (item === "/") return <Separator />;
  if (item === ">") return <Caret />;
  if (item === "#") return <CaretBox />;
  if (item === "@spin")
    return (
      <SpinField $w={80}>
        12
        <ClearMark>
          <svg width="6" height="6" viewBox="0 0 6 6">
            <path d="M.5.500l5 5M5.500.500l-5 5" stroke="#fff" strokeWidth="1.300" />
          </svg>
        </ClearMark>
        <FieldEnd>
          <SpinUp />
          <SpinDown />
        </FieldEnd>
      </SpinField>
    );
  if (item === "@combo")
    return (
      <ComboField $w={83}>
        px
        <SpinDown />
      </ComboField>
    );
  const flag = item[0];
  const name = flag === "!" || flag === "*" ? item.slice(1) : item;
  return (
    <ToolButton $off={flag === "!"} $active={flag === "*"}>
      <Svg>{icons[name]}</Svg>
    </ToolButton>
  );
};

const menus: [string, string, string][] = [
  ["", "P", "roject"],
  ["", "E", "dit"],
  ["", "V", "iew"],
  ["", "L", "ayer"],
  ["", "S", "ettings"],
  ["", "P", "lugins"],
  ["Vect", "o", "r"],
  ["", "R", "aster"],
  ["", "D", "atabase"],
  ["", "W", "eb"],
  ["", "M", "esh"],
  ["Pro", "c", "essing"],
  ["", "H", "elp"],
  ["", "V", "ektor"],
];

type BrowserItem = { name: string; icon: string; arrow?: "open" | "closed"; depth?: number; selected?: boolean };

const browserItems: BrowserItem[] = [
  { name: "Favorites", icon: "starTree" },
  { name: "Spatial Bookmarks", icon: "bookTree", arrow: "closed" },
  { name: "Project Home", icon: "homeProject", arrow: "closed" },
  { name: "Home", icon: "homeTree", arrow: "closed" },
  { name: "C:\\", icon: "folderTree", arrow: "closed" },
  { name: "Z:\\", icon: "folderTree", arrow: "closed" },
  { name: "GeoPackage", icon: "gpkgTree", arrow: "closed" },
  { name: "SpatiaLite", icon: "feather" },
  { name: "PostgreSQL", icon: "pg" },
  { name: "SAP HANA", icon: "hana" },
  { name: "MS SQL Server", icon: "mssql" },
  { name: "Oracle", icon: "oracle" },
  { name: "WMS/WMTS", icon: "globe" },
  { name: "Scenes", icon: "scenes" },
  { name: "Vector Tiles", icon: "vtiles" },
  { name: "XYZ Tiles", icon: "xyz", arrow: "open" },
  { name: "Mapzen Global Terrain", icon: "xyz", depth: 1 },
  { name: "OpenStreetMap", icon: "xyz", depth: 1, selected: true },
  { name: "WCS", icon: "wcs" },
  { name: "WFS / OGC API - Features", icon: "wfs", arrow: "open" },
  { name: "ALKIS Gebäude", icon: "alkis", arrow: "closed", depth: 1 },
];

type LayerItem = { name: string; icon: string; depth: number; on: boolean; arrow?: "open" | "closed"; kind?: string };

const layerItems: LayerItem[] = [
  { name: "area", icon: "area", depth: 0, on: false, kind: "off" },
  { name: "source", icon: "dot", depth: 0, on: true, kind: "bold" },
  { name: "zensus", icon: "dash", depth: 0, on: false, arrow: "closed", kind: "off" },
  { name: "F|Heat", icon: "stack", depth: 0, on: true, arrow: "open" },
  { name: "Net", icon: "stack", depth: 1, on: true },
  { name: "Heat Density", icon: "stack", depth: 1, on: false, arrow: "closed" },
  { name: "Adjusted Files", icon: "stack", depth: 1, on: true, arrow: "open" },
  { name: "adjusted_buildings", icon: "dark2", depth: 2, on: false, kind: "off" },
  { name: "adjusted_streets", icon: "lineStyle", depth: 2, on: true, kind: "current" },
  { name: "Basic Data", icon: "stack", depth: 1, on: false, arrow: "closed" },
];

const Tick = () => (
  <svg width="10" height="10" viewBox="0 0 10 10">
    <path d="M1.500 5.500L4 8.500 8.500 1" stroke="#000" strokeWidth="1.500" fill="none" />
  </svg>
);

const DockControls = () => (
  <DockButtons>
    <DockButton>
      <svg width="7" height="7" viewBox="0 0 7 7">
        <path d="M2 .5h4.500V5M.5 2h4v4.500h-4z" stroke="#555" fill="none" />
      </svg>
    </DockButton>
    <DockButton>
      <svg width="7" height="7" viewBox="0 0 7 7">
        <path d="M1 1l5 5M6 1L1 6" stroke="#333" strokeWidth="1.300" />
      </svg>
    </DockButton>
  </DockButtons>
);

const ROAD = "#a29e85";
const k = 1920 / 1568;
const toPath = (pts: number[][]) => "M" + pts.map(([x, y]) => `${(x * k).toFixed(1)} ${(y * k).toFixed(1)}`).join("L");

const roads: number[][][] = [
  [[402, 132], [403, 160], [402, 200], [394, 270], [375, 360], [345, 502], [330, 600], [325, 650], [321, 700], [322, 750], [328, 790], [334, 820]],
  [[212, 521], [280, 511], [345, 502], [435, 506], [442, 505], [449, 501], [455, 495], [598, 320], [700, 240], [784, 166], [795, 158], [806, 149], [813, 140], [819, 132]],
  [[848, 132], [880, 145], [1000, 178], [1087, 202], [1163, 229], [1290, 295], [1568, 438]],
  [[1269, 132], [1215, 178], [1163, 229]],
  [[1087, 202], [1035, 318], [1019, 339]],
  [[910, 568], [1052, 648]],
  [[212, 653], [260, 650], [325, 648]],
];

export default function App() {
  return (
    <Window>
      <GlobalStyle />
      <TitleBar>
        <svg width="16" height="16" viewBox="0 0 16 16">
          <circle cx="8" cy="7.500" r="5.500" fill="none" stroke="#7cb342" strokeWidth="3" />
          <path d="M8 8l6 7" stroke="#e8b21c" strokeWidth="3" />
        </svg>
        *example_project — QGIS
        <WinButtons>
          <WinButton>
            <svg width="11" height="11" viewBox="0 0 11 11"><path d="M.5 5.500h10" stroke="#222" /></svg>
          </WinButton>
          <WinButton>
            <svg width="11" height="11" viewBox="0 0 11 11"><path d="M.5 2.500h7v8h-7zM3 2.500V.5h7.500V8H8" stroke="#222" fill="none" /></svg>
          </WinButton>
          <WinButton>
            <svg width="11" height="11" viewBox="0 0 11 11"><path d="M.5.500l10 10M10.500.500l-10 10" stroke="#222" /></svg>
          </WinButton>
        </WinButtons>
      </TitleBar>
      <MenuBar>
        {menus.map(([a, b, c], i) => (
          <span key={i}>
            {a}
            <u>{b}</u>
            {c}
          </span>
        ))}
      </MenuBar>
      <Toolbars>
        {rows.map((row, i) => (
          <ToolRow key={i}>
            {row.map((item, j) => (
              <Tool key={j} item={item} />
            ))}
          </ToolRow>
        ))}
      </Toolbars>
      <Main>
        <Side>
          <BrowserDock>
            <DockHead>
              Browser
              <DockControls />
            </DockHead>
            <DockTools>
              <SmallTool><Svg s={16}>{miniIcons.addGroup}</Svg></SmallTool>
              <SmallTool><Svg s={16}>{icons.refresh}</Svg></SmallTool>
              <SmallTool><Svg s={16}>{miniIcons.filter}</Svg></SmallTool>
              <SmallTool><Svg s={16}>{miniIcons.expand}</Svg></SmallTool>
              <SmallTool><Svg s={16}>{icons.info}</Svg></SmallTool>
            </DockTools>
            <TreeFrame>
              <TreeList>
                {browserItems.map((item) => (
                  <Row key={item.name} $selected={item.selected ? 207 : 0}>
                    <RowIndent $w={item.depth ? 34 : 18} $pad={item.depth ? 19 : 4}>
                      {item.arrow && (
                        <ArrowBox>
                          <Arrow $open={item.arrow === "open"} />
                        </ArrowBox>
                      )}
                    </RowIndent>
                    <RowIcon>
                      <Svg s={16}>{icons[item.icon]}</Svg>
                    </RowIcon>
                    {item.name}
                  </Row>
                ))}
              </TreeList>
              <ScrollBar>
                <ScrollEnd />
                <ScrollThumb />
                <ScrollRest />
                <ScrollEnd $down />
              </ScrollBar>
            </TreeFrame>
          </BrowserDock>
          <LayersDock>
            <DockHead>
              Layers
              <DockControls />
            </DockHead>
            <DockTools>
              <SmallTool><Svg s={16}>{miniIcons.brush}</Svg></SmallTool>
              <SmallTool><Svg s={16}>{miniIcons.addStack}</Svg></SmallTool>
              <SmallTool><Svg s={16}>{miniIcons.eye}</Svg></SmallTool>
              <SmallTool><Svg s={16}>{miniIcons.filterY}</Svg></SmallTool>
              <SmallTool><Svg s={16}>{miniIcons.epsilon}</Svg></SmallTool>
              <SmallCaret />
              <SmallTool><Svg s={16}>{miniIcons.collapse}</Svg></SmallTool>
              <SmallTool><Svg s={16}>{miniIcons.expand}</Svg></SmallTool>
              <SmallTool><Svg s={16}>{miniIcons.remove}</Svg></SmallTool>
            </DockTools>
            <LayerFrame>
              <TreeList>
                {layerItems.map((item) => (
                  <Row key={item.name} $selected={item.kind === "current" ? 252 : 0}>
                    <RowIndent $w={23.5 + item.depth * 20} $pad={6 + item.depth * 20}>
                      {item.arrow && (
                        <ArrowBox>
                          <Arrow $open={item.arrow === "open"} />
                        </ArrowBox>
                      )}
                    </RowIndent>
                    <Check>{item.on && <Tick />}</Check>
                    <RowIcon>
                      <Svg s={16}>{icons[item.icon]}</Svg>
                    </RowIcon>
                    <LayerName $kind={item.kind}>{item.name}</LayerName>
                  </Row>
                ))}
              </TreeList>
            </LayerFrame>
          </LayersDock>
        </Side>
        <Splitter />
        <MapFrame>
          <MapSvg viewBox="259 161 1661 842" preserveAspectRatio="xMinYMin slice">
            {roads.map((pts, i) => (
              <path key={i} d={toPath(pts)} stroke={ROAD} strokeWidth="1.200" fill="none" strokeLinejoin="round" />
            ))}
            <path d={toPath([[1018, 340], [910, 568]])} stroke="#ee7088" strokeWidth="1.200" strokeDasharray="1.500 3" fill="none" />
            <circle cx="1246.500" cy="417" r="23.500" fill="none" stroke="#ef6b6d" strokeWidth="10" />
            <rect x="1242.500" y="412.500" width="9" height="9" rx="1.500" fill="#fff" stroke="#ff00ff" strokeWidth="3" />
          </MapSvg>
        </MapFrame>
      </Main>
      <StatusBar>
        <Locator>
          <svg width="14" height="14" viewBox="0 0 14 14">
            <circle cx="6" cy="5.500" r="4.500" fill="none" stroke="#888" />
            <path d="M9 9l4 4" stroke="#888" strokeWidth="1.400" />
          </svg>
          Type to locate (Ctrl+K)
        </Locator>
        <Message>1 legend entry removed.</Message>
        <StatusRight>
          <StatusLabel>Coordinate</StatusLabel>
          <StatusField $w={118}>386503,0&nbsp;&nbsp;5778616,5</StatusField>
          <StatusIcon $w={28}>
            <svg width="16" height="18" viewBox="0 0 16 18">
              <path d="M3 2l10 14M13 2L3 16M2 8c3-4 9-4 12 0-3 4-9 4-12 0z" stroke="#444" strokeWidth="1.400" fill="none" />
            </svg>
          </StatusIcon>
          <StatusLabel $l={6}>Scale</StatusLabel>
          <StatusField $w={78}>
            1:638
            <ComboEnd><SpinDown /></ComboEnd>
          </StatusField>
          <StatusIcon $w={32}>
            <svg width="12" height="17" viewBox="0 0 12 17">
              <path d="M3 7V4.500a3 3 0 016 0V7" stroke="#666" strokeWidth="1.400" fill="none" />
              <rect x="1" y="7" width="10" height="9" rx="1" fill="#777" />
            </svg>
          </StatusIcon>
          <StatusLabel>Magnifier</StatusLabel>
          <StatusField $w={78}>
            100%
            <FieldEnd><SpinUp /><SpinDown /></FieldEnd>
          </StatusField>
          <StatusLabel $l={11}>Rotation</StatusLabel>
          <StatusField $w={80} $l={7}>
            0,0 °
            <FieldEnd><SpinUp /><SpinDown /></FieldEnd>
          </StatusField>
          <RenderCheck><Tick /></RenderCheck>
          <StatusLabel>Render</StatusLabel>
          <StatusIcon $w={27} $r={0}>
            <svg width="15" height="15" viewBox="0 0 24 24">
              <circle cx="12" cy="12" r="10" fill="#ccc" stroke="#666" strokeWidth="2" />
              <path d="M2 12h20M12 2c-6 6-6 14 0 20M12 2c6 6 6 14 0 20M4 7h16M4 17h16" stroke="#666" strokeWidth="1.500" fill="none" />
            </svg>
          </StatusIcon>
          <StatusLabel $l={3}>EPSG:25832</StatusLabel>
          <StatusIcon $w={44} $r={7}>
            <svg width="16" height="17" viewBox="0 0 16 17">
              <path d="M8 1c4 0 7 2.500 7 6.500S12 14 9 14l-3 3v-3.500C3 13 1 11 1 7.500S4 1 8 1z" fill="#666" />
              <path d="M4.500 7.500h1.500M7.500 7.500h1.500M10.500 7.500H12" stroke="#fff" strokeWidth="1.500" />
            </svg>
          </StatusIcon>
        </StatusRight>
      </StatusBar>
    </Window>
  );
}
